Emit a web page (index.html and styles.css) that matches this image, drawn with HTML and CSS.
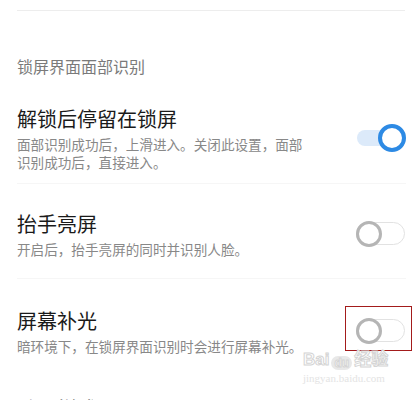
FILE: index.html
```html
<!DOCTYPE html>
<html lang="zh-CN">
<head>
    <meta charset="UTF-8">
    <meta name="viewport" content="width=device-width, initial-scale=1.0">
    <title>面部识别设置</title>
    <link rel="stylesheet" href="styles.css">
</head>
<body>
    <div class="page">
        <div class="rule top-rule"></div>

        <div class="section-title">锁屏界面面部识别</div>

        <div class="item first">
            <div class="text">
                <div class="title">解锁后停留在锁屏</div>
                <div class="desc">面部识别成功后，上滑进入。关闭此设置，面部识别成功后，直接进入。</div>
            </div>
            <div class="switch on"><span class="track"></span><span class="knob"></span></div>
        </div>

        <div class="rule"></div>

        <div class="item second">
            <div class="text">
                <div class="title">抬手亮屏</div>
                <div class="desc">开启后，抬手亮屏的同时并识别人脸。</div>
            </div>
            <div class="switch"><span class="track"></span><span class="knob"></span></div>
        </div>

        <div class="rule"></div>

        <div class="item third">
            <div class="text">
                <div class="title">屏幕补光</div>
                <div class="desc">暗环境下，在锁屏界面识别时会进行屏幕补光。</div>
            </div>
            <div class="switch marked"><span class="track"></span><span class="knob"></span></div>
        </div>

        <div class="item last">
            <div class="text">
                <div class="title">动画样式</div>
            </div>
            <span class="chevron">›</span>
        </div>
    </div>

    <!-- watermark -->
    <div class="watermark">
        <div class="wm-logo"><span>Bai</span><span class="paw">du</span><span>经验</span></div>
        <div class="wm-url">jingyan.baidu.com</div>
    </div>
</body>
</html>
```

FILE: styles.css
```css
body {
    margin: 0;
    background: #fff;
    font-family: "Noto Sans CJK SC", "Noto Sans", sans-serif;
    overflow: hidden;
}
.page {
    padding: 0 14px 0 17px;
}
.rule {
    height: 1px;
    background: #f6f6f6;
}
.top-rule {
    margin-top: 10px;
    margin-right: 1px;
    background: #ededed;
}
.section-title {
    margin-top: 44px;
    font-size: 16px;
    line-height: 22px;
    color: #7a7a7a;
}
.item {
    display: flex;
    align-items: center;
    justify-content: space-between;
}
.item.first {
    padding: 28px 0 12px;
}
.item.second {
    padding: 26px 0 20px;
}
.item.third {
    padding: 28px 0 20px;
}
.item.last {
    padding: 20px 0 0;
}
.title {
    font-size: 20px;
    line-height: 28px;
    color: #1a1a1a;
}
.desc {
    max-width: 296px;
    margin-top: 2px;
    font-size: 13.6px;
    line-height: 18px;
    color: #888;
}
.switch {
    position: relative;
    flex: none;
    width: 50px;
    height: 28px;
}
.switch .track {
    position: absolute;
    left: 0;
    top: 2px;
    width: 47px;
    height: 21px;
    border: 1.5px solid #e2e2e2;
    border-radius: 12px;
}
.switch .knob {
    position: absolute;
    left: 0;
    top: 1px;
    width: 20px;
    height: 20px;
    border: 3px solid #b5b5b5;
    border-radius: 50%;
    background: #fff;
}
.switch.on .track {
    top: 6px;
    left: 1px;
    width: 40px;
    height: 16px;
    border: none;
    border-radius: 8px;
    background: #dceafa;
}
.switch.on .knob {
    left: 22px;
    top: 0;
    width: 20px;
    height: 20px;
    border: 4px solid #2d8ae4;
}
.switch.marked::after {
    content: "";
    position: absolute;
    left: -11px;
    top: -11px;
    width: 65px;
    height: 43px;
    border: 1px solid #a31b1b;
}
.chevron {
    font-size: 20px;
    line-height: 28px;
    color: #bbb;
    margin-right: 2px;
}
.watermark {
    position: absolute;
    left: 303px;
    top: 350px;
    color: #fff;
    pointer-events: none;
}
.wm-logo {
    display: flex;
    align-items: flex-end;
    font-family: "Liberation Sans", "Noto Sans CJK SC", sans-serif;
    font-size: 17px;
    font-weight: bold;
    line-height: 20px;
    -webkit-text-stroke: 1px #d4d4d4;
}
.wm-logo .paw {
    margin: 0 2px;
    padding: 0 3px;
    font-size: 12px;
    line-height: 14px;
    border-radius: 7px;
    background: #e8e8e8;
}
.wm-url {
    margin-top: 2px;
    font-family: "Liberation Serif", serif;
    font-size: 11px;
    color: #e4e4e4;
}
```
